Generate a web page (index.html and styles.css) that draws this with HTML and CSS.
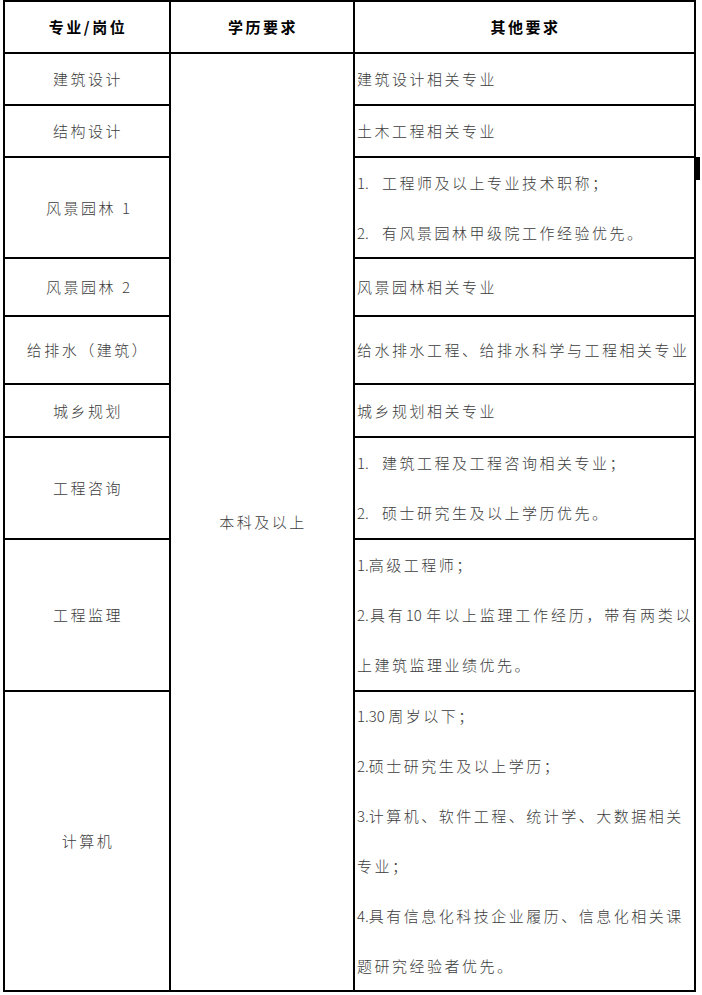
FILE: index.html
```html
<!DOCTYPE html>
<html lang="zh-CN">
<head>
<meta charset="utf-8">
<title>招聘岗位</title>
<link rel="stylesheet" href="styles.css">
</head>
<body>
<div class="sheet">
  <div class="grid">
    <div class="cell head">专业/岗位</div>
    <div class="cell head">学历要求</div>
    <div class="cell head">其他要求</div>

    <div class="cell edu">本科及以上</div>

    <div class="cell name">建筑设计</div>
    <div class="cell req">建筑设计相关专业</div>

    <div class="cell name">结构设计</div>
    <div class="cell req">土木工程相关专业</div>

    <div class="cell name">风景园林<span class="n gap">1</span></div>
    <div class="cell req"><div><span class="pre">1.</span>工程师及以上专业技术职称；<br><span class="pre">2.</span>有风景园林甲级院工作经验优先。</div></div>

    <div class="cell name">风景园林<span class="n gap">2</span></div>
    <div class="cell req">风景园林相关专业</div>

    <div class="cell name">给排水（建筑）</div>
    <div class="cell req">给水排水工程、给排水科学与工程相关专业</div>

    <div class="cell name">城乡规划</div>
    <div class="cell req">城乡规划相关专业</div>

    <div class="cell name">工程咨询</div>
    <div class="cell req"><div><span class="pre">1.</span>建筑工程及工程咨询相关专业；<br><span class="pre">2.</span>硕士研究生及以上学历优先。</div></div>

    <div class="cell name">工程监理</div>
    <div class="cell req"><div><span class="n">1.</span>高级工程师；<span class="fill"><span class="n">2.</span>具有<span class="n">10 </span>年以上监理工作经历，带有两类以</span>上建筑监理业绩优先。</div></div>

    <div class="cell name">计算机</div>
    <div class="cell req"><div><span class="n">1.30 </span>周岁以下；<br><span class="n">2.</span>硕士研究生及以上学历；<br><span class="n">3.</span>计算机、软件工程、统计学、大数据相关<br>专业；<br><span class="n">4.</span>具有信息化科技企业履历、信息化相关课<br>题研究经验者优先。</div></div>
  </div>
  <span class="mark"></span>
</div>
</body>
</html>
```

FILE: styles.css
```css
html, body {
  margin: 0;
  padding: 0;
  background: #ffffff;
}

.sheet {
  position: relative;
  width: 702px;
  height: 995px;
}

.grid {
  margin-left: 3px;
  width: 693px;
  box-sizing: border-box;
  display: grid;
  grid-template-columns: 164px 182px 339px;
  grid-template-rows: 50px 50px 50px 99px 56px 66px 51px 100px 150px 298px;
  gap: 2px;
  padding: 2px;
  background: #000000;
  font-family: "Noto Sans CJK SC", "Liberation Sans", sans-serif;
  font-size: 15px;
  color: #3c3c3c;
  font-weight: 300;
}

.cell {
  background: #ffffff;
  display: flex;
  align-items: center;
  line-height: 50px;
  letter-spacing: 2.5px;
  white-space: nowrap;
  overflow: visible;
}

.head {
  justify-content: center;
  font-weight: 700;
  color: #000000;
  padding-left: 2px;
}

.name {
  grid-column: 1;
  justify-content: center;
  padding-left: 2px;
}

.edu {
  grid-column: 2;
  grid-row: 2 / 11;
  justify-content: center;
  padding-left: 2px;
}

.req {
  grid-column: 3;
  justify-content: flex-start;
  padding-left: 2px;
}

.n {
  letter-spacing: 0;
}

.gap {
  margin-left: 6px;
}

.pre {
  display: inline-block;
  width: 25px;
  letter-spacing: 0;
}

.fill {
  display: block;
  width: 335px;
  text-align: justify;
  text-align-last: justify;
  letter-spacing: 1.5px;
}

.mark {
  position: absolute;
  left: 695px;
  top: 157px;
  width: 5px;
  height: 23px;
  background: #000000;
}
```
